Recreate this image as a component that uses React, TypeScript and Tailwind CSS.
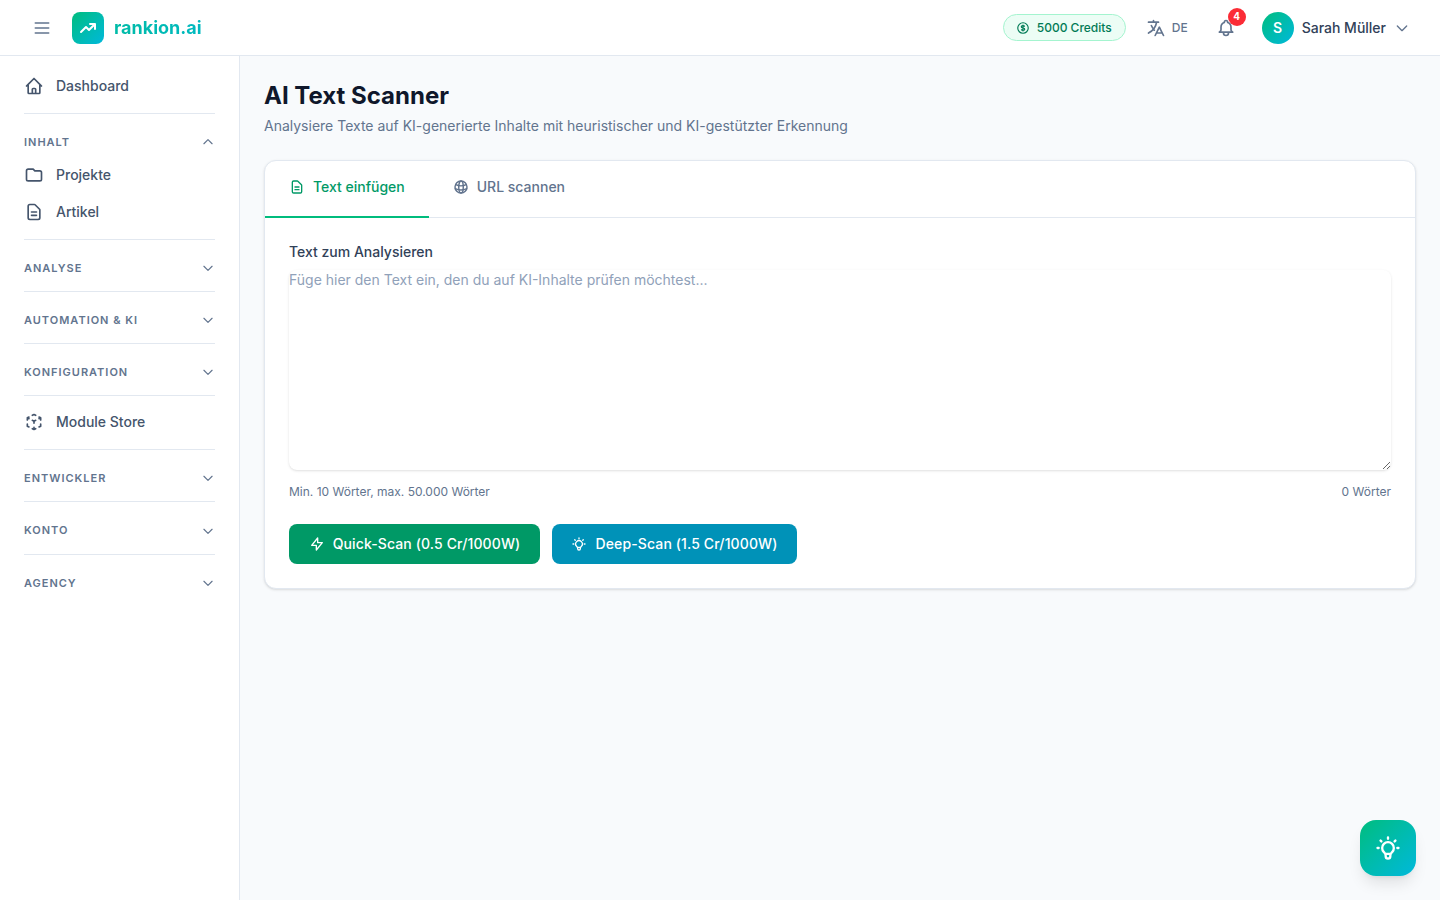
import {
  HiOutlineBell,
  HiOutlineChevronDown,
  HiOutlineChevronUp,
  HiOutlineCubeTransparent,
  HiOutlineCurrencyDollar,
  HiOutlineDocumentText,
  HiOutlineFolder,
  HiOutlineHome,
  HiOutlineLightBulb,
  HiOutlineLightningBolt,
  HiOutlineMenu,
  HiOutlineTranslate,
  HiTrendingUp,
} from 'react-icons/hi'
import type { ReactNode } from 'react'

function NavItem({ icon, label }: { icon: ReactNode; label: string }) {
  return (
    <a className="flex h-9 items-center gap-3 text-sm font-[450] text-slate-600">
      <span className="flex w-5 justify-center text-slate-600">{icon}</span>
      {label}
    </a>
  )
}

function Section({ label }: { label: string }) {
  return (
    <div className="flex h-[52.2px] items-start border-t border-slate-200 pt-[20.3px]">
      <div className="flex h-4 w-full items-center justify-between text-slate-500">
        <span className="text-[11px] font-semibold tracking-[0.09em]">{label}</span>
        <HiOutlineChevronDown className="h-3.5 w-3.5" />
      </div>
    </div>
  )
}

function GlobeIcon() {
  return (
    <svg className="h-4 w-4" viewBox="0 0 24 24" fill="none" stroke="currentColor" strokeWidth="2.2" strokeLinecap="round">
      <circle cx="12" cy="12" r="9" />
      <ellipse cx="12" cy="12" rx="3.4" ry="9" />
      <path d="M4.2 8.5c2.3 1.2 5 1.8 7.8 1.8s5.500-.6 7.800-1.800" />
      <path d="M3.400 14.500c2.600 1.300 5.600 2 8.600 2s6-.7 8.600-2" />
    </svg>
  )
}

function Sidebar() {
  return (
    <aside className="w-[240px] shrink-0 border-r border-slate-200 bg-white px-6 pt-3">
      <div className="pb-[9px]">
        <NavItem icon={<HiOutlineHome className="h-5 w-5" />} label="Dashboard" />
      </div>

      <div className="border-t border-slate-200 pt-5 pb-[8.6px]">
        <div className="mb-[7px] flex h-4 items-center justify-between text-slate-500">
          <span className="text-[11px] font-semibold tracking-[0.09em]">INHALT</span>
          <HiOutlineChevronUp className="h-3.5 w-3.5" />
        </div>
        <div className="flex flex-col gap-px">
          <NavItem icon={<HiOutlineFolder className="h-5 w-5" />} label="Projekte" />
          <NavItem icon={<HiOutlineDocumentText className="h-5 w-5" />} label="Artikel" />
        </div>
      </div>

      <Section label="ANALYSE" />
      <Section label="AUTOMATION & KI" />
      <Section label="KONFIGURATION" />

      <div className="flex h-[54px] items-center border-t border-slate-200 pb-px">
        <div className="w-full">
          <NavItem icon={<HiOutlineCubeTransparent className="h-5 w-5" />} label="Module Store" />
        </div>
      </div>

      <Section label="ENTWICKLER" />
      <Section label="KONTO" />
      <Section label="AGENCY" />
    </aside>
  )
}

function Header() {
  return (
    <header className="flex h-14 shrink-0 items-center justify-between border-b border-slate-200 bg-white pr-[30px] pl-8">
      <div className="flex items-center gap-5">
        <HiOutlineMenu className="h-5 w-5 text-slate-500" />
        <div className="flex items-center gap-2.5">
          <div className="flex h-8 w-8 items-center justify-center rounded-lg bg-gradient-to-br from-emerald-500 to-cyan-500">
            <HiTrendingUp className="h-5 w-5 text-white" />
          </div>
          <span className="bg-gradient-to-r from-teal-500 to-[#00b9c0] bg-clip-text text-lg font-bold text-transparent">
            rankion.ai
          </span>
        </div>
      </div>

      <div className="flex items-center">
        <div className="flex h-[27px] items-center gap-[7px] rounded-full border border-emerald-200 bg-emerald-50 pr-[13px] pl-3 text-xs font-[550] text-emerald-700">
          <HiOutlineCurrencyDollar className="h-3.5 w-3.5" />
          5000 Credits
        </div>
        <div className="ml-5 flex items-center gap-1.5 text-slate-500">
          <HiOutlineTranslate className="h-5 w-5" />
          <span className="text-xs font-medium">DE</span>
        </div>
        <div className="relative ml-7 text-slate-500">
          <HiOutlineBell className="h-5 w-5" />
          <span className="absolute -top-2.5 -right-[10px] flex h-[18px] w-[18px] items-center justify-center rounded-full bg-red-500 text-[10px] font-bold text-white">
            4
          </span>
        </div>
        <div className="ml-[26px] flex items-center">
          <div className="flex h-8 w-8 items-center justify-center rounded-full bg-gradient-to-br from-emerald-500 to-cyan-500 text-sm font-semibold text-white">
            S
          </div>
          <span className="ml-2 text-sm font-[450] text-slate-700">Sarah Müller</span>
          <HiOutlineChevronDown className="ml-2 h-4 w-4 text-slate-500" />
        </div>
      </div>
    </header>
  )
}

export default function App() {
  return (
    <div className="flex h-screen flex-col overflow-hidden bg-slate-50 font-['Inter',sans-serif] antialiased">
      <Header />
      <div className="flex min-h-0 flex-1">
        <Sidebar />
        <main className="flex-1 p-6">
          <h1 className="text-2xl font-bold leading-8 text-slate-900">AI Text Scanner</h1>
          <p className="mt-1 text-sm text-slate-500">
            Analysiere Texte auf KI-generierte Inhalte mit heuristischer und KI-gestützter Erkennung
          </p>

          <div className="mt-6 rounded-xl border border-slate-200 bg-white shadow-sm">
            <div className="flex h-[57px] border-b border-slate-200">
              <button className="-mb-px flex items-center gap-2 border-b-2 border-emerald-500 px-6 pb-1 text-sm font-[450] text-emerald-600">
                <HiOutlineDocumentText className="h-4 w-4" />
                Text einfügen
              </button>
              <button className="flex items-center gap-2 px-6 pb-1 text-sm font-[450] text-slate-500">
                <GlobeIcon />
                URL scannen
              </button>
            </div>

            <div className="p-6">
              <label className="block text-sm font-[450] leading-5 text-slate-700">Text zum Analysieren</label>
              <textarea
                className="mt-2 block h-[200px] w-full resize-y rounded-lg border-0 bg-white text-sm leading-5 text-slate-700 shadow-sm outline-none placeholder:text-slate-400"
                placeholder="Füge hier den Text ein, den du auf KI-Inhalte prüfen möchtest..."
              />
              <div className="mt-3.5 flex items-center justify-between text-xs leading-4 text-slate-500">
                <span>Min. 10 Wörter, max. 50.000 Wörter</span>
                <span>0 Wörter</span>
              </div>
              <div className="mt-6 flex gap-3">
                <button className="flex h-10 w-[251px] items-center justify-center gap-2 rounded-lg bg-emerald-600 text-sm font-medium tracking-[0.009em] text-white">
                  <HiOutlineLightningBolt className="h-4 w-4" />
                  Quick-Scan (0.5 Cr/1000W)
                </button>
                <button className="flex h-10 w-[245px] items-center justify-center gap-2 rounded-lg bg-cyan-600 text-sm font-medium tracking-[0.009em] text-white">
                  <HiOutlineLightBulb className="h-4 w-4" />
                  Deep-Scan (1.5 Cr/1000W)
                </button>
              </div>
            </div>
          </div>
        </main>
      </div>

      <button className="fixed right-6 bottom-6 flex h-14 w-14 items-center justify-center rounded-2xl bg-gradient-to-br from-emerald-500 to-cyan-500 text-white shadow-lg">
        <HiOutlineLightBulb className="h-7 w-7" />
      </button>
    </div>
  )
}
